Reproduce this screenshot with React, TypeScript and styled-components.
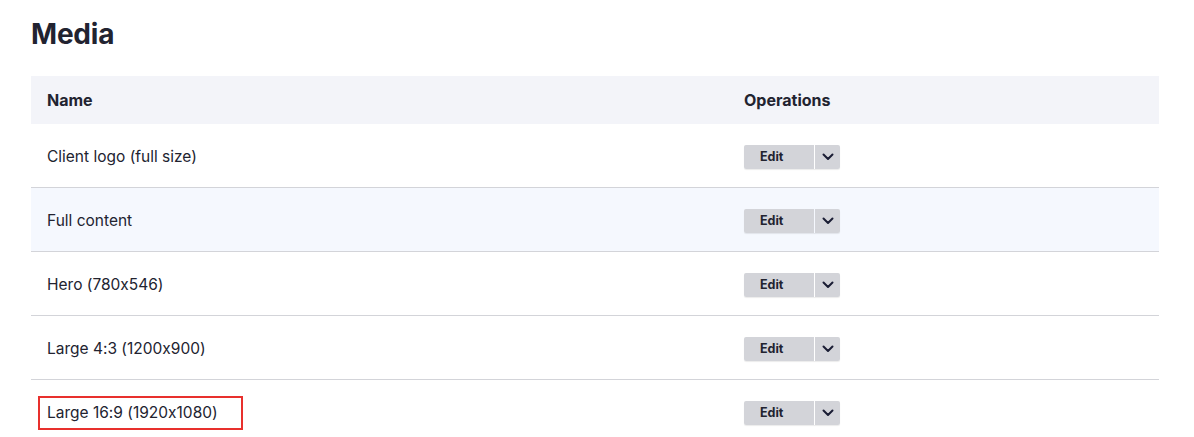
import React from "react";
import styled, { createGlobalStyle } from "styled-components";

const Global = createGlobalStyle`
  html, body { margin: 0; padding: 0; background: #fff; }
  body {
    font-family: Inter, "Noto Sans", sans-serif;
    color: #222330;
    font-feature-settings: "calt" 0;
  }
`;

const Page = styled.main`
  padding: 18px 35px 0 31px;
`;

const Title = styled.h1`
  margin: 0 0 26px;
  font-size: 28px;
  line-height: 32px;
  font-weight: 700;
  letter-spacing: -0.2px;
  color: #222330;
`;

const Table = styled.table`
  width: 100%;
  border-collapse: separate;
  border-spacing: 0;
  font-size: 15.5px;
`;

const HeadCell = styled.th<{ $w?: string }>`
  background: #f3f4f9;
  height: 48px;
  padding: 0 16px;
  text-align: left;
  font-weight: 700;
  font-size: 16px;
  box-sizing: border-box;
  width: ${(p) => p.$w || "auto"};
`;

const Row = styled.tr<{ $hover?: boolean }>`
  background: ${(p) => (p.$hover ? "#f5f8fe" : "#fff")};
  & > td { border-bottom: 1px solid #d3d4d9; }
  &:last-child > td { border-bottom: none; }
`;

const Cell = styled.td`
  height: 61px;
  padding: 2px 16px 0;
  vertical-align: middle;
`;

const Label = styled.span<{ $flag?: boolean }>`
  display: inline-block;
  padding: 6px 23px 6px 7px;
  margin-left: -9px;
  border: 2px solid ${(p) => (p.$flag ? "#e8302d" : "transparent")};
  line-height: 18px;
`;

const Dropbutton = styled.div`
  display: inline-flex;
  height: 24px;
  border-radius: 2px;
  overflow: hidden;
  box-shadow: 0 1px 1px rgba(0, 0, 0, 0.08);
`;

const EditBtn = styled.span`
  width: 70px;
  box-sizing: border-box;
  padding-left: 16px;
  display: flex;
  align-items: center;
  background: #d3d4d9;
  font-size: 12.5px;
  font-weight: 700;
  color: #222330;
`;

const Toggle = styled.span`
  width: 25px;
  margin-left: 1px;
  display: flex;
  align-items: center;
  justify-content: center;
  background: #d3d4d9;
`;

const Chevron = () => (
  <svg width="12" height="8" viewBox="0 0 12 8" fill="none">
    <path d="M1.5 1.5 L6 6 L10.5 1.5" stroke="#1b1e35" strokeWidth="2" strokeLinecap="round" strokeLinejoin="round" />
  </svg>
);

const rows = [
  { name: "Client logo (full size)" },
  { name: "Full content", hover: true },
  { name: "Hero (780x546)" },
  { name: "Large 4:3 (1200x900)" },
  { name: "Large 16:9 (1920x1080)", flag: true },
];

export default function App() {
  return (
    <>
      <Global />
      <Page>
        <Title>Media</Title>
        <Table>
          <thead>
            <tr>
              <HeadCell $w="697px">Name</HeadCell>
              <HeadCell>Operations</HeadCell>
            </tr>
          </thead>
          <tbody>
            {rows.map((r) => (
              <Row key={r.name} $hover={r.hover}>
                <Cell>
                  <Label $flag={r.flag}>{r.name}</Label>
                </Cell>
                <Cell>
                  <Dropbutton>
                    <EditBtn>Edit</EditBtn>
                    <Toggle>
                      <Chevron />
                    </Toggle>
                  </Dropbutton>
                </Cell>
              </Row>
            ))}
          </tbody>
        </Table>
      </Page>
    </>
  );
}
